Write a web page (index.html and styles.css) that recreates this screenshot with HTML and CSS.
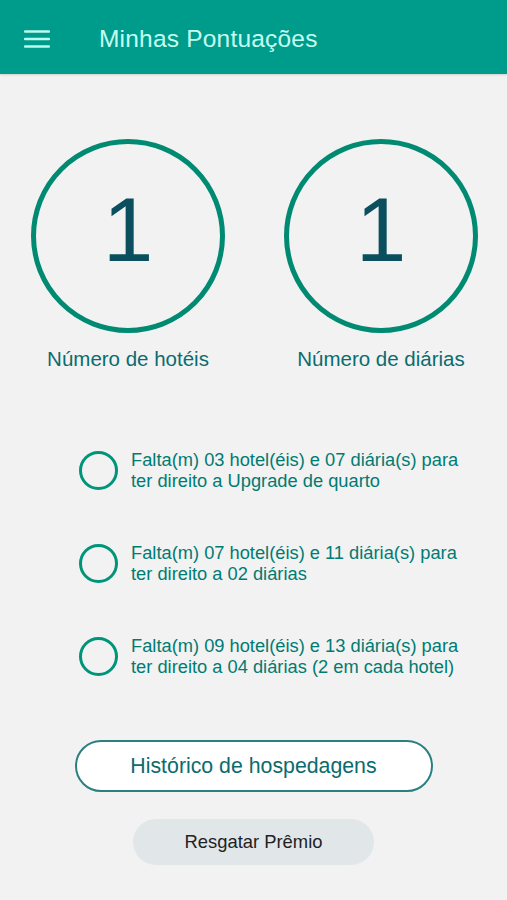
FILE: index.html
```html
<!DOCTYPE html>
<html>
<head>
  <title>Minhas Pontuações</title>
  <meta charset="utf-8">
  <link rel="stylesheet" href="styles.css">
</head>
<body>
  <div class="header">
    <span class="menu-icon">
      <svg width="26" height="18" viewBox="0 0 26 18">
        <path d="M1 1.5H25M1 9H25M1 16.5H25" stroke="#b9fbef" stroke-width="2.4" stroke-linecap="round"/>
      </svg>
    </span>
    <h1 class="title">Minhas Pontuações</h1>
  </div>

  <div class="scores">
    <div class="score">
      <div class="ring">1</div>
      <p class="score-label">Número de hotéis</p>
    </div>
    <div class="score">
      <div class="ring">1</div>
      <p class="score-label">Número de diárias</p>
    </div>
  </div>

  <ul class="goals">
    <li class="goal">
      <span class="check"></span>
      <p>Falta(m) 03 hotel(éis) e 07 diária(s) para ter direito a Upgrade de quarto</p>
    </li>
    <li class="goal">
      <span class="check"></span>
      <p>Falta(m) 07 hotel(éis) e 11 diária(s) para ter direito a 02 diárias</p>
    </li>
    <li class="goal">
      <span class="check"></span>
      <p>Falta(m) 09 hotel(éis) e 13 diária(s) para ter direito a 04 diárias (2 em cada hotel)</p>
    </li>
  </ul>

  <div class="actions">
    <button class="btn-outline">Histórico de hospedagens</button>
    <button class="btn-grey">Resgatar Prêmio</button>
  </div>
</body>
</html>
```

FILE: styles.css
```css
html, body {
  height: 100%;
}

body {
  margin: 0;
  background-color: #f2f2f2;
  font-family: "Liberation Sans", Arial, sans-serif;
}

/* Top bar */
.header {
  height: 74px;
  background-color: #009c8b;
  display: flex;
  align-items: center;
  padding-left: 24px;
  box-shadow: 0 1px 2px rgba(0, 0, 0, 0.15);
}

.menu-icon {
  display: flex;
  width: 26px;
  margin-top: 4px;
}

.title {
  margin: 4px 0 0 49px;
  font-size: 24.5px;
  font-weight: normal;
  color: #c4fdf2;
  letter-spacing: 0.2px;
}

/* Score rings */
.scores {
  display: flex;
  justify-content: center;
  gap: 59px;
  margin-top: 65px;
  padding-left: 2px;
}

.score {
  display: flex;
  flex-direction: column;
  align-items: center;
  width: 194px;
}

.ring {
  box-sizing: border-box;
  width: 194px;
  height: 194px;
  border: 5px solid #008a72;
  border-radius: 50%;
  display: flex;
  align-items: center;
  justify-content: center;
  font-size: 91px;
  color: #0b4f5e;
  padding-bottom: 12px;
}

.score-label {
  margin: 14px 0 0;
  font-size: 20.5px;
  color: #0a6c70;
  white-space: nowrap;
}

/* Goals list */
.goals {
  list-style-type: none;
  margin: 72px 0 0;
  padding: 0 0 0 79px;
}

.goal {
  display: flex;
  align-items: center;
  height: 54px;
  margin-bottom: 39px;
}

.goal:last-child {
  margin-bottom: 0;
}

.check {
  box-sizing: border-box;
  flex: none;
  width: 39px;
  height: 39px;
  border: 3px solid #009479;
  border-radius: 50%;
  margin-right: 13px;
}

.goal p {
  margin: 0;
  width: 345px;
  font-size: 18.3px;
  line-height: 21px;
  color: #007b72;
}

/* Buttons */
.actions {
  display: flex;
  flex-direction: column;
  align-items: center;
  margin-top: 57px;
}

.btn-outline {
  width: 358px;
  height: 52px;
  background-color: #ffffff;
  border: 2px solid #2c7f80;
  border-radius: 26px;
  font-family: inherit;
  font-size: 21.3px;
  color: #0b6b6d;
}

.btn-grey {
  width: 241px;
  height: 46px;
  margin-top: 27px;
  background-color: #e1e6e9;
  border: none;
  border-radius: 23px;
  font-family: inherit;
  font-size: 18.4px;
  color: #222222;
}
```
